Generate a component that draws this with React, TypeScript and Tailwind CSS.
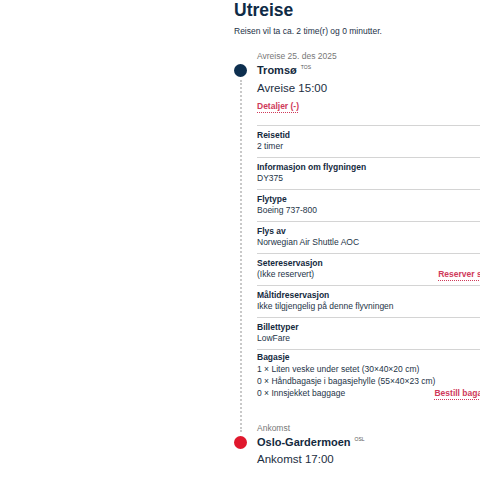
const rows = [
  { label: "Reisetid", values: ["2 timer"] },
  { label: "Informasjon om flygningen", values: ["DY375"] },
  { label: "Flytype", values: ["Boeing 737-800"] },
  { label: "Flys av", values: ["Norwegian Air Shuttle AOC"] },
  { label: "Setereservasjon", values: ["(Ikke reservert)"], link: "Reserver sete" },
  { label: "Måltidreservasjon", values: ["Ikke tilgjengelig på denne flyvningen"] },
  { label: "Billettyper", values: ["LowFare"] },
];

const bagasje = [
  "1 × Liten veske under setet (30×40×20 cm)",
  "0 × Håndbagasje i bagasjehylle (55×40×23 cm)",
  "0 × Innsjekket baggage",
];

const LinkText = ({ children }): JSX.Element => (
  <span className="text-[8.5px] leading-[11px] font-semibold text-[#cf3a5a] underline decoration-dotted decoration-[#cf3a5a] underline-offset-[3px] whitespace-nowrap">
    {children}
  </span>
);

const App = (): JSX.Element => {
  return (
    <div className="w-[480px] h-[480px] overflow-hidden bg-white font-['Liberation_Sans',Arial,sans-serif]">
      <div className="ml-[234px] w-[260px]">
        <h1 className="text-[17.5px] leading-[20px] font-bold text-[#0f2b46]">Utreise</h1>
        <p className="mt-[5px] text-[8.5px] leading-[12px] text-[#1c3147]">
          Reisen vil ta ca. 2 time(r) og 0 minutter.
        </p>

        <div className="grid grid-cols-[13px_1fr] gap-x-[10px] mt-[13px]">
          <div />
          <p className="text-[8.5px] leading-[12px] text-[#777]">Avreise 25. des 2025</p>

          <div className="mt-[2px] w-[13px] h-[13px] rounded-full bg-[#0d2f4f]" />
          <p className="text-[11px] leading-[16px] font-bold text-[#13293d]">
            Tromsø <span className="align-top text-[5px] leading-[10px] font-normal text-[#555] ml-[1px]">TOS</span>
          </p>

          <div className="flex justify-center pt-[2px] pb-[2px]">
            <div className="border-l-2 border-dotted border-[#c9c9c9]" />
          </div>
          <div>
            <p className="mt-[2px] text-[11.5px] leading-[17px] text-[#1b2e42]">Avreise 15:00</p>
            <div className="mt-[1px] leading-[12px]">
              <LinkText>Detaljer (-)</LinkText>
            </div>

            <div className="mt-[13px]">
              {rows.map((row) => (
                <div key={row.label} className="border-t border-[#d4d4d4] pt-[4px] pb-[5px]">
                  <p className="text-[8.5px] leading-[11px] font-bold text-[#13293d]">{row.label}</p>
                  <div className="flex justify-between items-end">
                    {row.values.map((v) => (
                      <p key={v} className="text-[8.5px] leading-[11px] text-[#243447]">{v}</p>
                    ))}
                    {row.link && <LinkText>{row.link}</LinkText>}
                  </div>
                </div>
              ))}
              <div className="border-t border-[#d4d4d4] pt-[2px]">
                <p className="text-[8.5px] leading-[11px] font-bold text-[#13293d]">Bagasje</p>
                {bagasje.map((b, i) => (
                  <div key={b} className="flex justify-between items-end">
                    <p className="text-[8.5px] leading-[12px] text-[#243447]">{b}</p>
                    {i === bagasje.length - 1 && <LinkText>Bestill bagasje</LinkText>}
                  </div>
                ))}
              </div>
            </div>

            <p className="mt-[23px] text-[8.5px] leading-[12px] text-[#777]">Ankomst</p>
          </div>

          <div className="mt-[2px] w-[13px] h-[13px] rounded-full bg-[#e0182d]" />
          <p className="text-[11px] leading-[16px] font-bold text-[#13293d]">
            Oslo-Gardermoen <span className="align-top text-[5px] leading-[10px] font-normal text-[#555] ml-[1px]">OSL</span>
          </p>

          <div />
          <p className="mt-[1px] text-[11.5px] leading-[17px] text-[#1b2e42]">Ankomst 17:00</p>
        </div>
      </div>
    </div>
  );
};

export default App;
